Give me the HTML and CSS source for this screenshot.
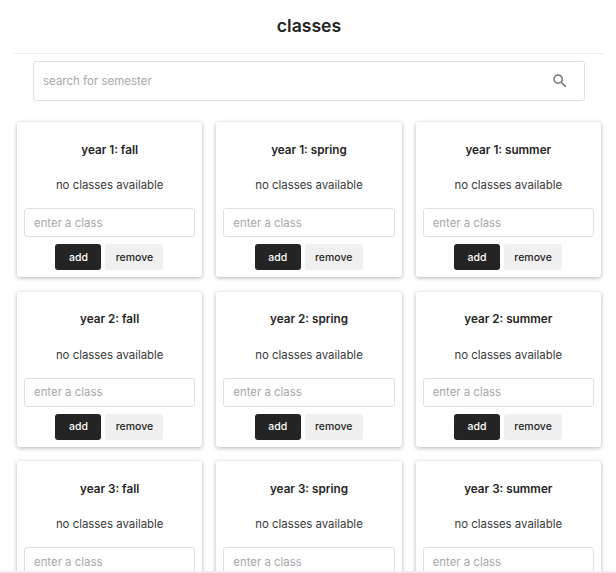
FILE: index.html
```html
<!DOCTYPE html>
<html lang="en">
<head>
<meta charset="utf-8">
<title>classes</title>
<link rel="stylesheet" href="styles.css">
</head>
<body>
<main class="page">
  <header class="header"><h1>classes</h1></header>
  <div class="search">
    <input class="search-input" type="text" placeholder="search for semester">
    <svg class="search-icon" viewBox="0 0 24 24" width="24" height="24"><path fill="#757575" d="M15.5 14h-.79l-.28-.27A6.47 6.47 0 0 0 16 9.5 6.5 6.5 0 1 0 9.5 16c1.61 0 3.09-.59 4.23-1.57l.27.28v.79l5 4.99L20.49 19l-4.99-5zm-6 0C7.01 14 5 11.99 5 9.5S7.01 5 9.5 5 14 7.01 14 9.5 11.99 14 9.5 14z"/></svg>
  </div>
  <section class="grid">
    <article class="card"><h2>year 1: fall</h2><p>no classes available</p><input type="text" placeholder="enter a class"><div class="actions"><button class="add">add</button><button class="remove">remove</button></div></article>
    <article class="card"><h2>year 1: spring</h2><p>no classes available</p><input type="text" placeholder="enter a class"><div class="actions"><button class="add">add</button><button class="remove">remove</button></div></article>
    <article class="card"><h2>year 1: summer</h2><p>no classes available</p><input type="text" placeholder="enter a class"><div class="actions"><button class="add">add</button><button class="remove">remove</button></div></article>
    <article class="card"><h2>year 2: fall</h2><p>no classes available</p><input type="text" placeholder="enter a class"><div class="actions"><button class="add">add</button><button class="remove">remove</button></div></article>
    <article class="card"><h2>year 2: spring</h2><p>no classes available</p><input type="text" placeholder="enter a class"><div class="actions"><button class="add">add</button><button class="remove">remove</button></div></article>
    <article class="card"><h2>year 2: summer</h2><p>no classes available</p><input type="text" placeholder="enter a class"><div class="actions"><button class="add">add</button><button class="remove">remove</button></div></article>
    <article class="card"><h2>year 3: fall</h2><p>no classes available</p><input type="text" placeholder="enter a class"><div class="actions"><button class="add">add</button><button class="remove">remove</button></div></article>
    <article class="card"><h2>year 3: spring</h2><p>no classes available</p><input type="text" placeholder="enter a class"><div class="actions"><button class="add">add</button><button class="remove">remove</button></div></article>
    <article class="card"><h2>year 3: summer</h2><p>no classes available</p><input type="text" placeholder="enter a class"><div class="actions"><button class="add">add</button><button class="remove">remove</button></div></article>
  </section>
</main>
<div class="bottom-line"></div>
</body>
</html>
```
FILE: styles.css
```css
* { box-sizing: border-box; }
html, body { margin: 0; height: 100%; overflow: hidden; background: #fff; }
body { font-family: Inter, "Liberation Sans", sans-serif; color: #242424; }
.page { padding: 0 12px 0 14px; }
.header { height: 54px; border-bottom: 1px solid #efefef; display: flex; align-items: center; justify-content: center; }
h1 { margin: 0; font-size: 17.6px; font-weight: 600; line-height: 24px; padding-bottom: 1px; }
.search { margin: 7px 19px 0; height: 40px; border: 1px solid #e0e0e0; border-radius: 3px; display: flex; align-items: center; padding: 0 15px 0 9px; }
.search-input { flex: 1; min-width: 0; border: 0; outline: 0; padding: 0; font: 11.5px Inter, "Liberation Sans", sans-serif; color: #242424; background: transparent; }
.search-input::placeholder { color: #a8a8a8; opacity: 1; }
.search-icon { width: 18px; height: 18px; flex: none; }
.grid { margin: 21px 3px 0; display: grid; grid-template-columns: repeat(3, minmax(0, 1fr)); column-gap: 14px; row-gap: 14.25px; }
.card { height: 155.25px; background: #fff; border-radius: 3px; box-shadow: 0 1px 4px rgba(0,0,0,.3); padding: 19.5px 7px 0; display: flex; flex-direction: column; align-items: stretch; text-align: center; }
h2 { margin: 0; font-size: 11.7px; font-weight: 600; line-height: 16px; }
.card p { margin: 19.5px 0 0; font-size: 11.4px; line-height: 16px; color: #3a3a3a; }
.card input { margin-top: 15px; width: 100%; min-width: 0; height: 29px; border: 1px solid #e0e0e0; border-radius: 3px; padding: 0 9px; font: 11.4px Inter, "Liberation Sans", sans-serif; outline: 0; background: #fff; }
.card input::placeholder { color: #a8a8a8; opacity: 1; }
.actions { margin-top: 7px; padding-right: .5px; display: flex; justify-content: center; gap: 4px; }
.actions button { height: 26px; border: 0; border-radius: 3px; font: 500 10.5px Inter, "Liberation Sans", sans-serif; padding: 0; }
.add { width: 46px; background: #242424; color: #fff; }
.remove { width: 58px; background: #f0f0f0; color: #242424; }
.bottom-line { position: fixed; left: 0; right: 0; bottom: 0; height: 2px; background: #f7e6f7; }
```
